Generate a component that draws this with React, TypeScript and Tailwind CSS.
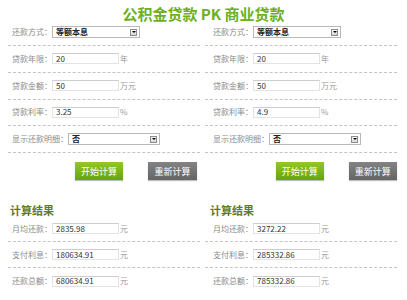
import React from "react";

type ColumnProps = {
  rate: string;
  results: string[];
  pad: string;
  btnPad: string;
  headPad: string;
};

function Dropdown({ value, width }: { value: string; width: string }) {
  return (
    <div
      className={`${width} h-[12px] border border-[#b8b8b8] bg-white flex items-center justify-between pl-[3px] pr-[2px]`}
    >
      <span className="text-[8px] leading-[8px] font-bold text-[#222]">{value}</span>
      <span className="w-[7px] h-[7px] border border-[#8c8c8c] bg-gradient-to-b from-[#fafafa] to-[#d6d6d6] flex items-center justify-center">
        <span className="w-0 h-0 border-l-[2px] border-r-[2px] border-t-[2px] border-l-transparent border-r-transparent border-t-black" />
      </span>
    </div>
  );
}

function Field({ value, unit }: { value: string; unit: string }) {
  return (
    <div className="flex items-center">
      <div className="w-[67px] h-[11px] border border-[#e3e3e3] border-t-[#cdcdcd] bg-white flex items-center pl-[3px]">
        <span className="text-[8px] leading-[8px] text-[#333]">{value}</span>
      </div>
      <span className="ml-[1px] text-[8px] leading-[8px] text-[#999]">{unit}</span>
    </div>
  );
}

function Row({
  label,
  children,
  pad,
  height,
  line = true,
}: {
  label: string;
  children: React.ReactNode;
  pad: string;
  height: string;
  line?: boolean;
}) {
  return (
    <div
      className={`${height} ${pad} flex items-center ${
        line ? "border-b border-dashed border-[#c4c4c4]" : ""
      }`}
    >
      <span className="text-[8px] leading-[8px] text-[#8a8a8a] whitespace-nowrap">{label}</span>
      {children}
    </div>
  );
}

function Column({ rate, results, pad, btnPad, headPad }: ColumnProps) {
  const resultLabels = ["月均还款：", "支付利息：", "还款总额："];

  return (
    <div className="w-[192px]">
      <Row label="还款方式：" pad={pad} height="h-[26.75px]">
        <Dropdown value="等额本息" width="w-[88px]" />
      </Row>
      <Row label="贷款年限：" pad={pad} height="h-[26.75px]">
        <Field value="20" unit="年" />
      </Row>
      <Row label="贷款金额：" pad={pad} height="h-[26.75px]">
        <Field value="50" unit="万元" />
      </Row>
      <Row label="贷款利率：" pad={pad} height="h-[26.75px]">
        <Field value={rate} unit="%" />
      </Row>
      <Row label="显示还款明细：" pad={pad} height="h-[26.75px]">
        <Dropdown value="否" width="w-[92px]" />
      </Row>

      <div className={`mt-[9px] h-[18px] flex ${btnPad} gap-[25px]`}>
        <button className="w-[48px] h-[18px] bg-gradient-to-b from-[#93c925] to-[#66a30f] text-white text-[9px] leading-[9px] shadow-[0_1px_1px_rgba(0,0,0,0.25)]">
          开始计算
        </button>
        <button className="w-[49px] h-[18px] bg-gradient-to-b from-[#838383] to-[#656565] text-white text-[9px] leading-[9px] shadow-[0_1px_1px_rgba(0,0,0,0.25)]">
          重新计算
        </button>
      </div>

      <div className={`mt-[25px] h-[11px] ${headPad} text-[11px] leading-[11px] font-bold text-[#5e7d1c]`}>
        计算结果
      </div>

      {results.map((v, i) => (
        <Row
          key={i}
          label={resultLabels[i]}
          pad={pad}
          height="h-[26px]"
          line={i < results.length - 1}
        >
          <Field value={v} unit="元" />
        </Row>
      ))}
    </div>
  );
}

export default function App() {
  return (
    <div className="w-[407px] h-[300px] overflow-hidden bg-white font-['Noto_Sans_CJK_SC',sans-serif]">
      <div className="h-[19.25px] pt-[6px] text-center text-[15px] leading-[15px] font-bold text-[#6cb021]">
        公积金贷款 PK 商业贷款
      </div>
      <div className="flex pl-[8px] gap-[5px]">
        <Column
          rate="3.25"
          results={["2835.98", "180634.91", "680634.91"]}
          pad="pl-[4px]"
          btnPad="pl-[67px]"
          headPad="pl-[2px]"
        />
        <Column
          rate="4.9"
          results={["3272.22", "285332.86", "785332.86"]}
          pad="pl-[8px]"
          btnPad="pl-[71px]"
          headPad="pl-[5px]"
        />
      </div>
    </div>
  );
}
